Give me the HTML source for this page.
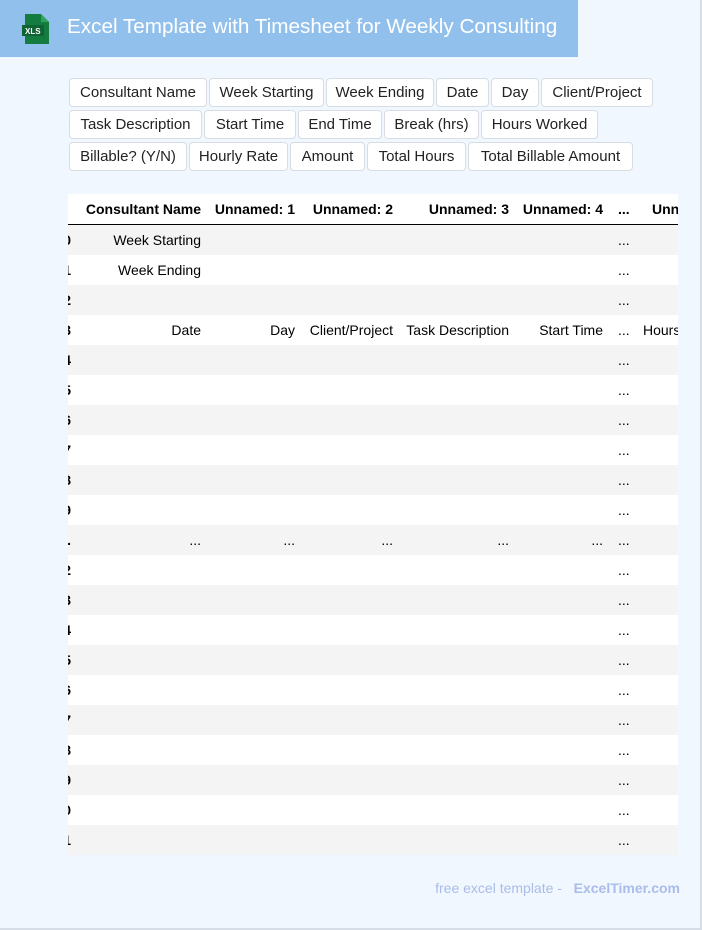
<!DOCTYPE html>
<html><head><meta charset="utf-8"><style>
*{margin:0;padding:0;box-sizing:border-box}
body{width:702px;height:930px;background:#f0f7ff;position:relative;overflow:hidden;font-family:"Liberation Sans",Arial,sans-serif}
.frame{position:absolute;left:0;top:0;width:702px;height:930px;border-right:2px solid #d6dde6;border-bottom:2px solid #d6dde6}
.hdr{position:absolute;left:0;top:0;width:578px;height:57px;background:#92c0ec}
.title{position:absolute;left:67px;top:15px;color:#fff;font-size:20.7px;white-space:nowrap}
.btn{position:absolute;height:29px;background:#fff;border:1px solid #d8dde3;border-radius:4px;font-size:15px;color:#222;line-height:28px;text-align:center;white-space:nowrap}
.tbl{position:absolute;left:68px;top:194px;width:610px;height:661px;overflow:hidden;background:#fff}
.row{position:absolute;left:0;width:610px;height:30px;font-size:14px;color:#000}
.g{background:#f4f4f4}
.c{position:absolute;top:0;line-height:30px;text-align:right;white-space:nowrap}
.hrow{position:absolute;top:0;left:0;width:610px;height:31px;border-bottom:1px solid #000;font-weight:bold;font-size:14px;background:#fff}
.i{right:607px;font-weight:bold}
.e{left:550px}
.foot{position:absolute;right:22px;top:880px;font-size:14px;color:#aabce8}
</style></head><body>
<div class="frame"></div>
<div class="hdr"></div>
<svg style="position:absolute;left:21px;top:13px" width="30" height="32" viewBox="0 0 30 32">
<path d="M4 1h16l8 8v22H4z" fill="#157c3f"/><path d="M20 1v8h8z" fill="#2fa35e"/>
<rect x="1" y="12" width="22" height="11" fill="#106333"/>
<text x="4" y="21" font-family="Liberation Sans" font-size="8" font-weight="bold" fill="#fff">XLS</text></svg>
<div class="title">Excel Template with Timesheet for Weekly Consulting</div>

<div class="btn" style="left:69px;top:78px;width:138px">Consultant Name</div>
<div class="btn" style="left:209px;top:78px;width:115px">Week Starting</div>
<div class="btn" style="left:326px;top:78px;width:108px">Week Ending</div>
<div class="btn" style="left:436px;top:78px;width:53px">Date</div>
<div class="btn" style="left:491px;top:78px;width:48px">Day</div>
<div class="btn" style="left:541px;top:78px;width:112px">Client/Project</div>
<div class="btn" style="left:69px;top:110px;width:133px">Task Description</div>
<div class="btn" style="left:204px;top:110px;width:92px">Start Time</div>
<div class="btn" style="left:298px;top:110px;width:84px">End Time</div>
<div class="btn" style="left:384px;top:110px;width:95px">Break (hrs)</div>
<div class="btn" style="left:481px;top:110px;width:117px">Hours Worked</div>
<div class="btn" style="left:69px;top:142px;width:118px">Billable? (Y/N)</div>
<div class="btn" style="left:189px;top:142px;width:99px">Hourly Rate</div>
<div class="btn" style="left:290px;top:142px;width:75px">Amount</div>
<div class="btn" style="left:367px;top:142px;width:99px">Total Hours</div>
<div class="btn" style="left:468px;top:142px;width:165px">Total Billable Amount</div>

<div class="tbl">
<div class="hrow">
<span class="c" style="right:477px">Consultant Name</span>
<span class="c" style="right:383px">Unnamed: 1</span>
<span class="c" style="right:285px">Unnamed: 2</span>
<span class="c" style="right:169px">Unnamed: 3</span>
<span class="c" style="right:75px">Unnamed: 4</span>
<span class="c" style="left:550px">...</span>
<span class="c" style="left:584px">Unnamed: 5</span>
</div>
<div class="row g" style="top:31px"><span class="c i">0</span><span class="c" style="right:477px">Week Starting</span><span class="c e">...</span></div>
<div class="row" style="top:61px"><span class="c i">1</span><span class="c" style="right:477px">Week Ending</span><span class="c e">...</span></div>
<div class="row g" style="top:91px"><span class="c i">2</span><span class="c e">...</span></div>
<div class="row" style="top:121px"><span class="c i">3</span><span class="c" style="right:477px">Date</span><span class="c" style="right:383px">Day</span><span class="c" style="right:285px">Client/Project</span><span class="c" style="right:169px">Task Description</span><span class="c" style="right:75px">Start Time</span><span class="c e">...</span><span class="c" style="left:575px">Hours Worked</span></div>
<div class="row g" style="top:151px"><span class="c i">4</span><span class="c e">...</span></div>
<div class="row" style="top:181px"><span class="c i">5</span><span class="c e">...</span></div>
<div class="row g" style="top:211px"><span class="c i">6</span><span class="c e">...</span></div>
<div class="row" style="top:241px"><span class="c i">7</span><span class="c e">...</span></div>
<div class="row g" style="top:271px"><span class="c i">8</span><span class="c e">...</span></div>
<div class="row" style="top:301px"><span class="c i">9</span><span class="c e">...</span></div>
<div class="row g" style="top:331px"><span class="c i">.</span><span class="c" style="right:477px">...</span><span class="c" style="right:383px">...</span><span class="c" style="right:285px">...</span><span class="c" style="right:169px">...</span><span class="c" style="right:75px">...</span><span class="c e">...</span></div>
<div class="row" style="top:361px"><span class="c i">2</span><span class="c e">...</span></div>
<div class="row g" style="top:391px"><span class="c i">3</span><span class="c e">...</span></div>
<div class="row" style="top:421px"><span class="c i">4</span><span class="c e">...</span></div>
<div class="row g" style="top:451px"><span class="c i">5</span><span class="c e">...</span></div>
<div class="row" style="top:481px"><span class="c i">6</span><span class="c e">...</span></div>
<div class="row g" style="top:511px"><span class="c i">7</span><span class="c e">...</span></div>
<div class="row" style="top:541px"><span class="c i">8</span><span class="c e">...</span></div>
<div class="row g" style="top:571px"><span class="c i">9</span><span class="c e">...</span></div>
<div class="row" style="top:601px"><span class="c i">0</span><span class="c e">...</span></div>
<div class="row g" style="top:631px"><span class="c i">1</span><span class="c e">...</span></div>
</div>
<div class="foot">free excel template - &nbsp; <b>ExcelTimer.com</b></div>
</body></html>
